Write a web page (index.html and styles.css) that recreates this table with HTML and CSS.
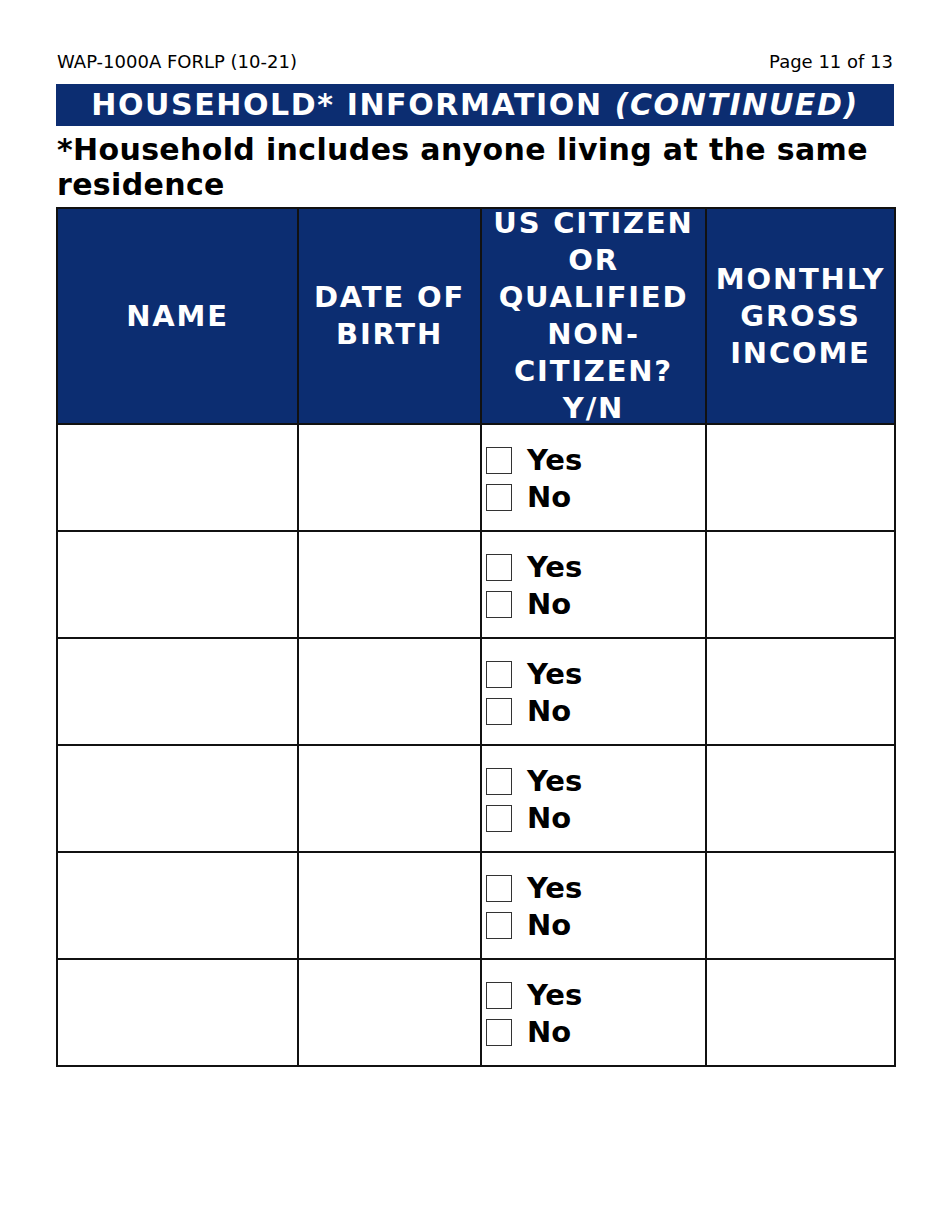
FILE: index.html
```html
<!DOCTYPE html>
<html>
<head>
<meta charset="utf-8">
<link rel="stylesheet" href="styles.css">
</head>
<body>
<div class="page">
  <div class="topline">
    <span>WAP-1000A FORLP (10-21)</span>
    <span>Page 11 of 13</span>
  </div>
  <div class="banner">HOUSEHOLD* INFORMATION <em>(CONTINUED)</em></div>
  <h2 class="note">*Household includes anyone living at the same residence</h2>
  <table class="grid">
    <colgroup>
      <col class="c1"><col class="c2"><col class="c3"><col class="c4">
    </colgroup>
    <thead>
      <tr>
        <th><div class="th-in">NAME</div></th>
        <th><div class="th-in">DATE OF<br>BIRTH</div></th>
        <th><div class="th-in">US CITIZEN<br>OR<br>QUALIFIED<br>NON-<br>CITIZEN?<br>Y/N</div></th>
        <th><div class="th-in">MONTHLY<br>GROSS<br>INCOME</div></th>
      </tr>
    </thead>
    <tbody>
      <tr><td></td><td></td><td><div class="yn"><div class="opt"><span class="box"></span>Yes</div><div class="opt"><span class="box"></span>No</div></div></td><td></td></tr>
      <tr><td></td><td></td><td><div class="yn"><div class="opt"><span class="box"></span>Yes</div><div class="opt"><span class="box"></span>No</div></div></td><td></td></tr>
      <tr><td></td><td></td><td><div class="yn"><div class="opt"><span class="box"></span>Yes</div><div class="opt"><span class="box"></span>No</div></div></td><td></td></tr>
      <tr><td></td><td></td><td><div class="yn"><div class="opt"><span class="box"></span>Yes</div><div class="opt"><span class="box"></span>No</div></div></td><td></td></tr>
      <tr><td></td><td></td><td><div class="yn"><div class="opt"><span class="box"></span>Yes</div><div class="opt"><span class="box"></span>No</div></div></td><td></td></tr>
      <tr><td></td><td></td><td><div class="yn"><div class="opt"><span class="box"></span>Yes</div><div class="opt"><span class="box"></span>No</div></div></td><td></td></tr>
    </tbody>
  </table>
</div>
</body>
</html>
```
FILE: styles.css
```css
html, body {
  margin: 0;
  padding: 0;
  background: #fff;
}
body {
  font-family: "DejaVu Sans", Verdana, sans-serif;
  color: #000;
}
.page {
  padding: 48px 56px 0 56px;
}
.topline {
  display: flex;
  justify-content: space-between;
  font-size: 18px;
  line-height: 28px;
  padding: 0 1px;
}
.banner {
  margin-top: 8px;
  background: #0c2d71;
  color: #fff;
  font-weight: bold;
  font-size: 30px;
  letter-spacing: 1.6px;
  text-align: center;
  height: 42px;
  line-height: 42px;
  width: 838px;
}
.banner em {
  font-style: italic;
}
.note {
  margin: 6px 0 0 1px;
  font-size: 30px;
  letter-spacing: 0.35px;
  line-height: 35px;
  font-weight: bold;
}
.grid {
  margin-top: 5px;
  width: 838px;
  border-collapse: collapse;
  table-layout: fixed;
}
.c1 { width: 241px; }
.c2 { width: 183px; }
.c3 { width: 225px; }
.c4 { width: 189px; }
.grid th, .grid td {
  border: 2px solid #111;
  padding: 0;
}
.grid th {
  background: #0c2d71;
  color: #fff;
  font-size: 29px;
  letter-spacing: 1.8px;
  line-height: 37px;
  font-weight: bold;
}
.th-in {
  height: 214px;
  display: flex;
  flex-direction: column;
  justify-content: center;
  overflow: hidden;
  text-align: center;
}
.grid td {
  height: 105px;
  vertical-align: top;
}
.yn {
  padding: 17px 0 0 4px;
}
.opt {
  display: flex;
  align-items: center;
  font-weight: bold;
  font-size: 29px;
  line-height: 37px;
}
.box {
  width: 24px;
  height: 25px;
  border: 1.5px solid #333;
  margin-right: 15px;
}
```
